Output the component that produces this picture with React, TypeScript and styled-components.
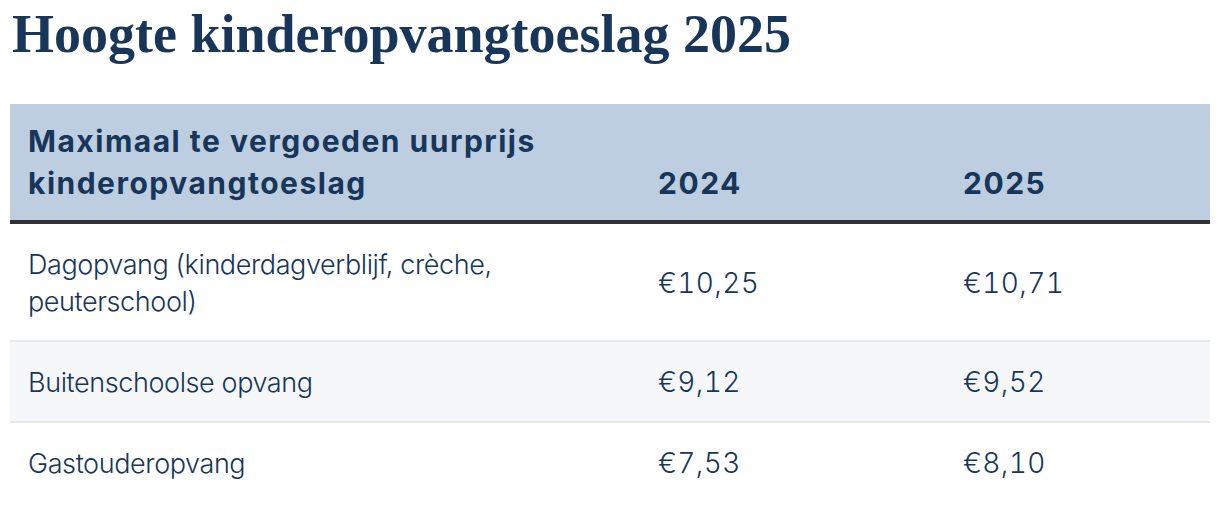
import { createGlobalStyle, styled } from "styled-components";

const GlobalStyle = createGlobalStyle`
  html, body {
    margin: 0;
    padding: 0;
    background: #ffffff;
  }
  body {
    font-family: Inter, "Noto Sans", sans-serif;
    color: #17365a;
  }
`;

const Page = styled.div`
  padding: 4px 10px 0 10px;
`;

const Title = styled.h2`
  margin: 0 0 40px 2px;
  font-family: "Liberation Serif", serif;
  font-weight: 700;
  font-size: 54px;
  line-height: 60px;
  color: #17365a;
`;

const Table = styled.table`
  width: 1200px;
  border-collapse: collapse;
  table-layout: fixed;
`;

const HeadRow = styled.tr`
  background: #bdcee0;
  border-bottom: 4px solid #333333;
`;

const HeadCell = styled.th<{ $width: number }>`
  box-sizing: border-box;
  width: ${(p) => p.$width}px;
  padding: 16px 18px;
  text-align: left;
  vertical-align: bottom;
  font-weight: 700;
  font-size: 30px;
  line-height: 42px;
  letter-spacing: 1.5px;
  color: #17365a;
`;

const BodyRow = styled.tr<{ $striped?: boolean }>`
  background: ${(p) => (p.$striped ? "#f6f7f9" : "#ffffff")};
  border-bottom: 2px solid #e6e8eb;

  &:last-child {
    border-bottom: none;
  }
`;

const Cell = styled.td<{ $numeric?: boolean }>`
  padding: 22px 18px 20px;
  vertical-align: middle;
  font-weight: 300;
  font-size: ${(p) => (p.$numeric ? "28px" : "27px")};
  line-height: 37px;
  letter-spacing: ${(p) => (p.$numeric ? "0.4px" : "-0.4px")};
  font-variant-numeric: ${(p) => (p.$numeric ? "tabular-nums" : "normal")};
  color: #17365a;
`;

const rows = [
  { label: "Dagopvang (kinderdagverblijf, crèche, peuterschool)", y2024: "€10,25", y2025: "€10,71" },
  { label: "Buitenschoolse opvang", y2024: "€9,12", y2025: "€9,52" },
  { label: "Gastouderopvang", y2024: "€7,53", y2025: "€8,10" },
];

export default function App() {
  return (
    <>
      <GlobalStyle />
      <Page>
        <Title>Hoogte kinderopvangtoeslag 2025</Title>
        <Table>
          <thead>
            <HeadRow>
              <HeadCell $width={630}>Maximaal te vergoeden uurprijs kinderopvangtoeslag</HeadCell>
              <HeadCell $width={305}>2024</HeadCell>
              <HeadCell $width={265}>2025</HeadCell>
            </HeadRow>
          </thead>
          <tbody>
            {rows.map((row, index) => (
              <BodyRow key={index} $striped={index % 2 === 1}>
                <Cell>{row.label}</Cell>
                <Cell $numeric>{row.y2024}</Cell>
                <Cell $numeric>{row.y2025}</Cell>
              </BodyRow>
            ))}
          </tbody>
        </Table>
      </Page>
    </>
  );
}
